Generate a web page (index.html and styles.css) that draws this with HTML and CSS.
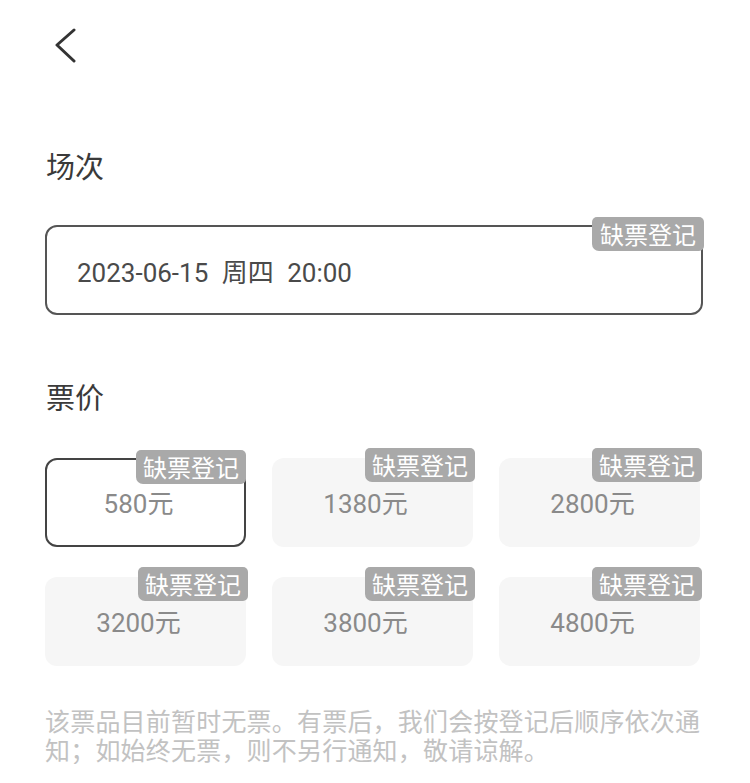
FILE: index.html
```html
<!DOCTYPE html>
<html lang="zh">
<head>
<meta charset="utf-8">
<link rel="stylesheet" href="styles.css">
</head>
<body>
<div class="page">
  <div class="topbar">
    <svg class="back" width="24" height="36" viewBox="0 0 24 36"><path d="M20 2 L3 17 L20 33" fill="none" stroke="#333" stroke-width="3" stroke-linecap="round" stroke-linejoin="round"/></svg>
  </div>
  <div class="title t1">场次</div>
  <div class="session">
    <span class="session-text">2023-06-15 周四 20:00</span>
    <span class="badge badge-session">缺票登记</span>
  </div>
  <div class="title t2">票价</div>
  <div class="grid">
    <div class="card selected"><span class="price">580元</span><span class="badge">缺票登记</span></div>
    <div class="card"><span class="price">1380元</span><span class="badge">缺票登记</span></div>
    <div class="card"><span class="price">2800元</span><span class="badge">缺票登记</span></div>
    <div class="card"><span class="price">3200元</span><span class="badge">缺票登记</span></div>
    <div class="card"><span class="price">3800元</span><span class="badge">缺票登记</span></div>
    <div class="card"><span class="price">4800元</span><span class="badge">缺票登记</span></div>
  </div>
  <p class="note">该票品目前暂时无票。有票后，我们会按登记后顺序依次通知；如始终无票，则不另行通知，敬请谅解。</p>
</div>
</body>
</html>
```
FILE: styles.css
```css
html, body {
  margin: 0;
  padding: 0;
  background: #fff;
}
body {
  font-family: "Noto Sans CJK SC", "Noto Sans", sans-serif;
}
.page {
  padding: 0 47px 0 45px;
}
.topbar {
  height: 66px;
  padding-top: 28px;
  box-sizing: border-box;
  padding-left: 9px;
}
.back {
  display: block;
}
.title {
  font-size: 29px;
  line-height: 40px;
  color: #3a3a3a;
  padding-left: 1px;
}
.t1 {
  margin-top: 79px;
}
.t2 {
  margin-top: 61px;
}
.session {
  position: relative;
  margin-top: 40px;
  height: 90px;
  box-sizing: border-box;
  border: 2px solid #555;
  border-radius: 12px;
  display: flex;
  align-items: center;
  padding-left: 30px;
}
.session-text {
  font-family: Roboto, "Noto Sans CJK SC", sans-serif;
  font-size: 26px;
  color: #4a4a4a;
  word-spacing: 7px;
}
.badge {
  position: absolute;
  background: #a9a9a9;
  color: #fff;
  font-size: 24px;
  line-height: 34px;
  height: 34px;
  padding: 0 8px;
  border-radius: 5px 5px 5px 7px;
  white-space: nowrap;
}
.badge-session {
  top: -10px;
  right: -3px;
}
.grid {
  margin-top: 42px;
  margin-right: 3px;
  display: grid;
  grid-template-columns: repeat(3, 1fr);
  column-gap: 26px;
  row-gap: 30px;
}
.card {
  position: relative;
  height: 89px;
  box-sizing: border-box;
  background: #f6f6f6;
  border-radius: 12px;
  display: flex;
  align-items: center;
  justify-content: center;
  padding-right: 14px;
}
.card .badge {
  top: -10px;
  right: -2px;
  padding: 0 7px;
}
.card.selected {
  background: #fff;
  border: 2.5px solid #444;
}
.price {
  font-family: Roboto, "Noto Sans CJK SC", sans-serif;
  font-size: 26px;
  color: #8a8a8a;
  margin-top: -2px;
}
.note {
  margin: 40px 0 0;
  font-size: 25px;
  line-height: 29px;
  color: #c2c2c2;
  letter-spacing: 0.2px;
}
```
